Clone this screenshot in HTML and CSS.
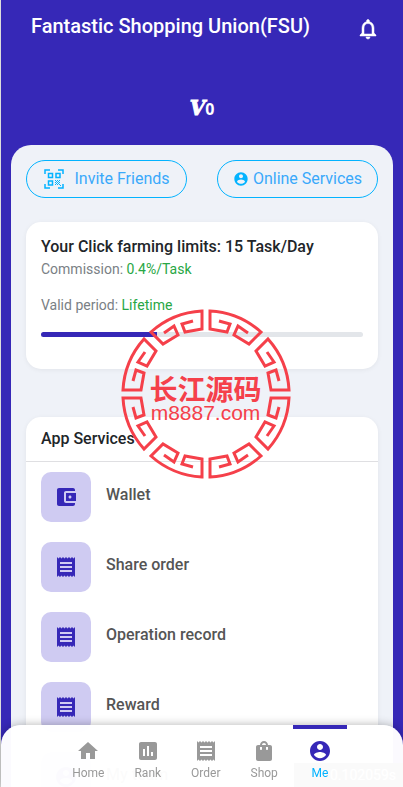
FILE: index.html
```html
<!doctype html>
<html lang="en">

<head>
  <meta charset="UTF-8">
  <meta name="viewport" content="width=device-width, initial-scale=1.0">
  <title>Fantastic Shopping Union(FSU)</title>
  <link rel="stylesheet" href="styles.css">
</head>

<body>

  <!-- shared icons -->
  <svg width="0" height="0" class="sprite">
    <symbol id="i-receipt" viewBox="0 0 24 24">
      <path d="M18 17H6v-2h12v2zm0-4H6v-2h12v2zm0-4H6V7h12v2zM3 22l1.5-1.5L6 22l1.5-1.5L9 22l1.5-1.5L12 22l1.5-1.5L15 22l1.5-1.5L18 22l1.5-1.5L21 22V2l-1.500 1.500L18 2l-1.500 1.500L15 2l-1.500 1.500L12 2l-1.500 1.500L9 2 7.500 3.500 6 2 4.500 3.500 3 2v20z"/>
    </symbol>
    <symbol id="i-account" viewBox="0 0 24 24">
      <path d="M12 2C6.480 2 2 6.480 2 12s4.480 10 10 10 10-4.480 10-10S17.520 2 12 2zm0 3c1.660 0 3 1.340 3 3s-1.340 3-3 3-3-1.340-3-3 1.340-3 3-3zm0 14.200c-2.500 0-4.710-1.280-6-3.220.030-1.990 4-3.080 6-3.080 1.990 0 5.970 1.090 6 3.080-1.290 1.940-3.500 3.220-6 3.220z"/>
    </symbol>
    <g id="key">
      <path d="M-13-73L-24-70L-21-62L-4-65V-83A83 83 0 0 0-55-62L-43-50L-28-59L-32-68L-42-61"/>
    </g>
    <g id="key-side">
      <path transform="matrix(0 1 1 0 0 0)" d="M-13-73L-24-70L-21-62L-4-65V-83A83 83 0 0 0-55-62L-43-50L-28-59L-32-68L-42-61"/>
    </g>
  </svg>

  <header class="head">
    <h1>Fantastic Shopping Union(FSU)</h1>
    <button class="bell" aria-label="Notifications">
      <svg class="icon" viewBox="0 0 24 24"><path d="M12 22c1.100 0 2-.9 2-2h-4c0 1.100.9 2 2 2zm6-6v-5c0-3.070-1.630-5.640-4.500-6.320V4c0-.830-.670-1.500-1.500-1.500s-1.500.670-1.500 1.500v.680C7.640 5.360 6 7.920 6 11v5l-2 2v1h16v-1l-2-2zm-2 1H8v-6c0-2.480 1.510-4.500 4-4.500s4 2.020 4 4.500v6z"/></svg>
    </button>
  </header>

  <div class="level"><i>V</i><b>0</b></div>

  <main class="panel">
    <div class="actions">
      <button class="btn-outline">
        <svg class="qr" viewBox="0 0 22 22">
          <path fill="none" stroke="currentColor" stroke-width="1.500" d="M2 6V2h5M15 2h5v4M2 16v4h5M15 20h5v-4M5.500 5.500h4v4h-4zM13 5.500h4v4h-4zM5.500 13h4v4h-4z"/>
          <path d="M12 12h1v1h-1zM14 12h1v1h-1zM16 12h1v1h-1zM13 13h1v1h-1zM15 13h1v1h-1zM12 14h1v1h-1zM14 14h1v1h-1zM16 14h1v1h-1zM13 15h1v1h-1zM15 15h1v1h-1zM12 16h1v1h-1zM14 16h1v1h-1zM16 16h1v1h-1zM17 17h1v1h-1z"/>
        </svg>
        <span>Invite Friends</span>
      </button>
      <button class="btn-outline services">
        <svg class="user" viewBox="0 0 24 24"><use href="#i-account"/></svg>
        <span>Online Services</span>
      </button>
    </div>

    <section class="card limits">
      <h2>Your Click farming limits: 15 Task/Day</h2>
      <p>Commission: <span>0.4%/Task</span></p>
      <p>Valid period: <span>Lifetime</span></p>
      <div class="progress"><div class="bar" style="width: 36%"></div></div>
    </section>

    <section class="card">
      <h2 class="card-title">App Services</h2>
      <ul class="list">
        <li><a href="#">
          <span class="thumb"><svg class="icon" viewBox="0 0 24 24"><path d="M21 18v1c0 1.100-.9 2-2 2H5c-1.110 0-2-.9-2-2V5c0-1.100.890-2 2-2h14c1.100 0 2 .9 2 2v1h-9c-1.110 0-2 .9-2 2v8c0 1.100.890 2 2 2h9zm-9-2h10V8H12v8zm4-2.500c-.830 0-1.500-.670-1.500-1.500s.670-1.500 1.500-1.500 1.500.670 1.500 1.500-.670 1.500-1.500 1.500z"/></svg></span>
          Wallet</a></li>
        <li><a href="#"><span class="thumb"><svg class="icon"><use href="#i-receipt"/></svg></span>Share order</a></li>
        <li><a href="#"><span class="thumb"><svg class="icon"><use href="#i-receipt"/></svg></span>Operation record</a></li>
        <li><a href="#"><span class="thumb"><svg class="icon"><use href="#i-receipt"/></svg></span>Reward</a></li>
        <li><a href="#"><span class="thumb"><svg class="icon"><use href="#i-account"/></svg></span>My team</a></li>
      </ul>
    </section>
  </main>

  <div class="stamp">
    <svg viewBox="-86 -86 172 172">
      <g fill="none" stroke="currentColor" stroke-width="3">
        <use href="#key"/>
        <use href="#key" transform="scale(-1 1)"/>
        <use href="#key" transform="scale(1 -1)"/>
        <use href="#key" transform="scale(-1 -1)"/>
        <use href="#key-side"/>
        <use href="#key-side" transform="scale(-1 1)"/>
        <use href="#key-side" transform="scale(1 -1)"/>
        <use href="#key-side" transform="scale(-1 -1)"/>
      </g>
    </svg>
    <div class="stamp-text">
      <strong lang="zh">长江源码</strong>
      <span>m8887.com</span>
    </div>
  </div>

  <div class="trace">0.102059s</div>

  <nav class="tabs">
    <a href="#"><svg class="icon" viewBox="0 0 24 24"><path d="M10 20v-6h4v6h5v-8h3L12 3 2 12h3v8z"/></svg>Home</a>
    <a href="#"><svg class="icon" viewBox="0 0 24 24"><path d="M19 3H5c-1.100 0-2 .9-2 2v14c0 1.100.9 2 2 2h14c1.100 0 2-.9 2-2V5c0-1.100-.9-2-2-2zM9 17H7v-7h2v7zm4 0h-2V7h2v10zm4 0h-2v-4h2v4z"/></svg>Rank</a>
    <a href="#"><svg class="icon"><use href="#i-receipt"/></svg>Order</a>
    <a href="#"><svg class="icon" viewBox="0 0 24 24"><path d="M18 6h-2c0-2.210-1.790-4-4-4S8 3.790 8 6H6c-1.100 0-2 .9-2 2v12c0 1.100.9 2 2 2h12c1.100 0 2-.9 2-2V8c0-1.100-.9-2-2-2zm-8 4c0 .550-.450 1-1 1s-1-.450-1-1V8h2v2zm2-6c1.100 0 2 .9 2 2h-4c0-1.100.9-2 2-2zm4 6c0 .550-.450 1-1 1s-1-.450-1-1V8h2v2z"/></svg>Shop</a>
    <a href="#" class="active"><svg class="icon"><use href="#i-account"/></svg>Me</a>
  </nav>

</body>

</html>
```
FILE: styles.css
```css
* {
  margin: 0;
  padding: 0;
  box-sizing: border-box;
}

body {
  background: #3628b7;
  border-left: 1px solid #dcdcdc;
  font-family: Roboto, "Liberation Sans", sans-serif;
  font-size: 16px;
  line-height: 24px;
}

a {
  color: inherit;
  text-decoration: none;
}

button {
  background: none;
  border: 0;
  font: inherit;
  color: inherit;
  cursor: pointer;
}

.sprite {
  position: absolute;
}

.icon {
  display: block;
  width: 24px;
  height: 24px;
  fill: currentColor;
}

.head {
  display: flex;
  justify-content: space-between;
  padding: 14px 23px 0 30px;
  color: #fff;
}

.head h1 {
  font-size: 20px;
  font-weight: 500;
  line-height: 24px;
}

.bell {
  padding-top: 3px;
}

.bell .icon {
  stroke: currentColor;
  stroke-width: .5;
}

.level {
  display: flex;
  justify-content: center;
  align-items: baseline;
  height: 24px;
  margin: 55px 0 25px;
  color: #fff;
}

.level i {
  font-family: "DejaVu Serif", serif;
  font-size: 20px;
  font-weight: bold;
  -webkit-text-stroke: 1px #fff;
}

.level b {
  font-family: "Open Sans", sans-serif;
  font-size: 16px;
}

.panel {
  margin: 0 10px;
  padding: 15px 15px 90px;
  border-radius: 20px;
  background: #eff2f8;
}

.actions {
  display: flex;
  gap: 30px;
  margin-bottom: 24px;
}

.btn-outline {
  flex: 1;
  display: flex;
  align-items: center;
  justify-content: center;
  gap: 9px;
  height: 38px;
  border: 1px solid #03b3ff;
  border-radius: 19px;
  color: #3aa9fb;
  white-space: nowrap;
}

.btn-outline svg {
  color: #03b3ff;
  fill: currentColor;
}

.services {
  gap: 4px;
}

.qr {
  width: 22px;
  height: 22px;
}

.user {
  width: 16px;
  height: 16px;
}

.card {
  margin-bottom: 48px;
  border-radius: 15px;
  background: #fff;
  box-shadow: 0 1px 5px rgba(0, 0, 0, .06);
}

.card h2 {
  font-size: 16px;
  font-weight: 500;
  color: #212529;
}

.limits {
  padding: 13px 15px 32px;
}

.limits p {
  margin-bottom: 15px;
  font-size: 14px;
  line-height: 21px;
  color: #7a7f85;
}

.limits p span {
  color: #28a745;
}

.progress {
  margin-top: 16px;
  height: 5px;
  border-radius: 4px;
  background: #e3e6ea;
  overflow: hidden;
}

.bar {
  height: 100%;
  background: #3628b7;
}

.card .card-title {
  padding: 10px 15px;
  border-bottom: 1px solid #dfdfe2;
}

.list {
  list-style: none;
  padding: 10px 15px;
}

.list li {
  margin-bottom: 20px;
}

.list a {
  display: flex;
  gap: 15px;
  font-weight: 500;
  line-height: 46px;
  color: #555;
}

.thumb {
  display: flex;
  align-items: center;
  justify-content: center;
  width: 50px;
  height: 50px;
  border-radius: 10px;
  background: #cfcbf2;
  color: #3628b7;
}

/* round stamp over the page */
.stamp {
  position: absolute;
  top: 308px;
  left: 50%;
  width: 172px;
  margin-left: -82px;
  color: #f5404a;
  pointer-events: none;
}

.stamp svg {
  display: block;
}

.stamp-text {
  position: absolute;
  top: 65px;
  left: 0;
  width: 100%;
  text-align: center;
}

.stamp-text strong,
.stamp-text span {
  display: block;
}

.stamp-text strong {
  font-family: "Noto Sans CJK SC", sans-serif;
  font-size: 28px;
  line-height: 30px;
}

.stamp-text span {
  font-family: "Liberation Sans", sans-serif;
  font-size: 21px;
  line-height: 20px;
}

.trace {
  position: fixed;
  right: 0;
  bottom: 0;
  padding: 0 7px 0 36px;
  background: #232323;
  color: #fff;
  font-size: 14px;
}

.tabs {
  position: fixed;
  left: 1px;
  right: 0;
  bottom: 0;
  display: flex;
  justify-content: center;
  height: 62px;
  border-radius: 20px 20px 0 0;
  background: rgba(255, 255, 255, .98);
  box-shadow: 0 0 10px rgba(0, 0, 0, .3);
}

.tabs a {
  display: flex;
  flex-direction: column;
  align-items: center;
  padding: 10px 15px 0;
  border-top: 4px solid transparent;
  font-size: 12px;
  line-height: 20px;
  color: #999;
}

.tabs .active {
  border-color: #3628b7;
  color: #03b3ff;
}

.tabs .active .icon {
  color: #3628b7;
}
```
